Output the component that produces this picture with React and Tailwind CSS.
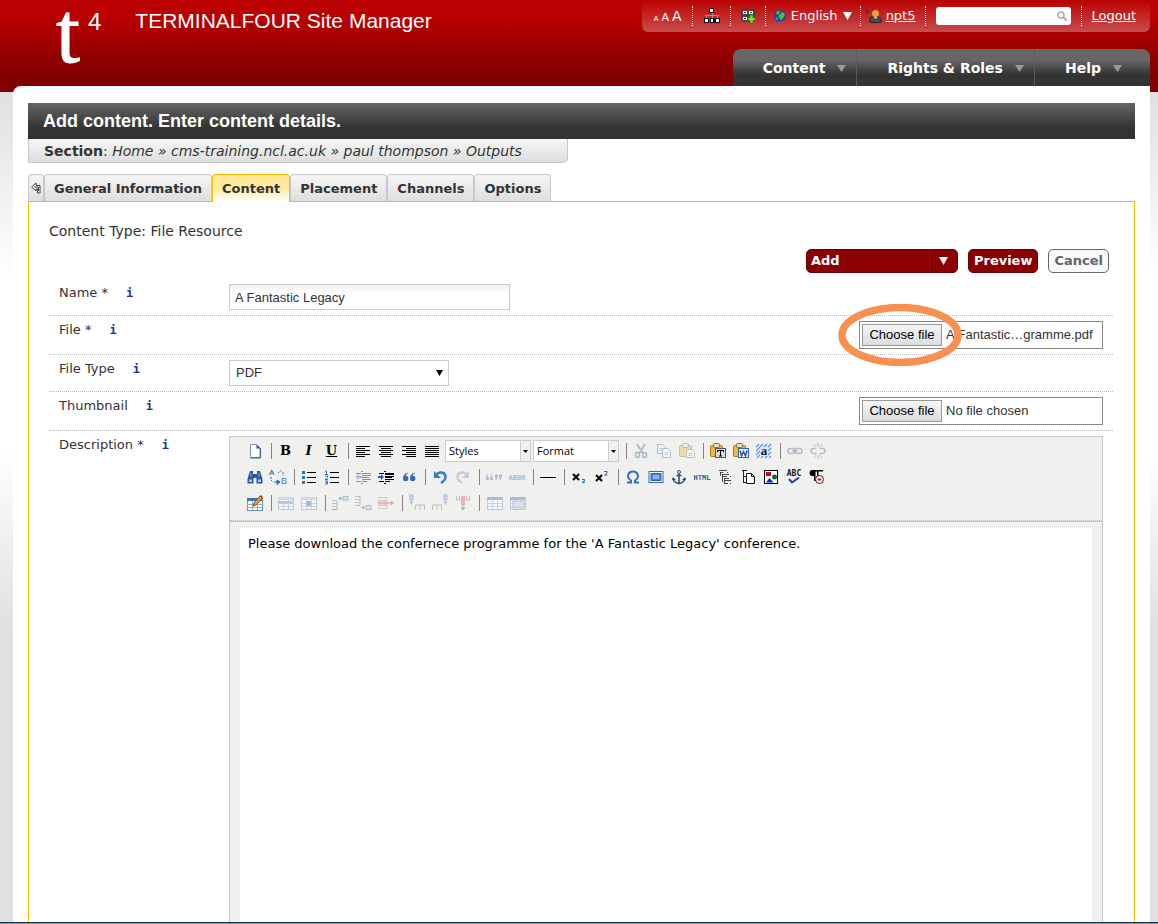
import { useRef } from "react";

const Icon = ({ children, faded }) => (
    <svg
        className={`h-4 w-4 overflow-visible ${faded ? "opacity-40" : ""}`}
        viewBox="0 0 16 16"
        fill="none"
        stroke="none"
        aria-hidden="true"
    >
        {children}
    </svg>
);

const Lines = ({ rows, color = "#000" }) => (
    <g fill={color} shapeRendering="crispEdges">
        {rows.map(([x, y, w], i) => (
            <rect key={i} x={x} y={y} width={w} height="1" />
        ))}
    </g>
);

// Small grid used by all the table icons
const Grid = ({ x = 0, y = 2, w = 15, h = 12, head = "#3f6fc4" }) => (
    <g shapeRendering="crispEdges">
        <rect x={x} y={y} width={w} height={h} fill="#fff" stroke="#6f8fbf" />
        <rect x={x} y={y} width={w} height="3" fill={head} />
        <path d={`M${x} ${y + 6}h${w}M${x} ${y + 9}h${w}M${x + 5} ${y + 3}v${h - 3}M${x + 10} ${y + 3}v${h - 3}`} stroke="#8fabd8" />
    </g>
);

const Clipboard = () => (
    <>
        <rect x="0.5" y="2.5" width="12" height="11" rx="1" fill="#efb93c" stroke="#a8771d" />
        <rect x="3.5" y="0.5" width="6" height="4" rx="1" fill="#e8e0c4" stroke="#77705c" />
    </>
);

const icons = {
    newPage: (
        <Icon>
            <path d="M3.5 1.5h6l3.500 3.500v9.500h-9.500z" fill="#fff" stroke="#7d93b5" />
            <path d="M9.500 1v4.500h4l-4-4.500z" fill="#2f5c96" />
            <path d="M13.500 5v10h-10" stroke="#3d5d8c" />
        </Icon>
    ),
    left: <Icon><Lines rows={[[1, 3, 14], [1, 5, 9], [1, 7, 14], [1, 9, 9], [1, 11, 14], [1, 13, 9]]} /></Icon>,
    center: <Icon><Lines rows={[[1, 3, 14], [3, 5, 10], [1, 7, 14], [3, 9, 10], [1, 11, 14], [3, 13, 10]]} /></Icon>,
    right: <Icon><Lines rows={[[1, 3, 14], [5, 5, 10], [1, 7, 14], [5, 9, 10], [1, 11, 14], [5, 13, 10]]} /></Icon>,
    full: <Icon><Lines rows={[[1, 3, 14], [1, 5, 14], [1, 7, 14], [1, 9, 14], [1, 11, 14], [1, 13, 14]]} /></Icon>,
    cut: (
        <Icon faded>
            <path d="M4 1l5.500 9M12 1l-5.500 9" stroke="#5f7396" strokeWidth="2" />
            <ellipse cx="4.500" cy="12" rx="2" ry="2.500" stroke="#3f64a8" strokeWidth="1.500" />
            <ellipse cx="11.500" cy="12" rx="2" ry="2.500" stroke="#3f64a8" strokeWidth="1.500" />
        </Icon>
    ),
    copy: (
        <Icon faded>
            <path d="M1.500 1.500h5l3 3v6h-8z" fill="#fff" stroke="#4a6da8" />
            <path d="M6.500 5.500h5l3 3v6h-8z" fill="#fff" stroke="#4a6da8" />
            <path d="M3 5.500h4M3 7.500h3M8.500 9.500h4M8.500 11.500h4" stroke="#7c99c9" />
        </Icon>
    ),
    paste: (
        <Icon faded>
            <Clipboard />
            <path d="M7.500 6.500h5l3 3v5h-8z" fill="#fff" stroke="#777" />
            <path d="M9.500 10.500h4M9.500 12.500h4" stroke="#888" />
        </Icon>
    ),
    pasteText: (
        <Icon>
            <Clipboard />
            <rect x="5.500" y="5.500" width="10" height="9" fill="#d5dbe3" stroke="#4c5664" />
            <path d="M7.500 9v-1.500h6v1.500M10.500 7.500v5.500M9 13h3" stroke="#000" />
        </Icon>
    ),
    pasteWord: (
        <Icon>
            <Clipboard />
            <rect x="5.500" y="5.500" width="10" height="9" fill="#f2f6fc" stroke="#3762a8" />
            <path d="M7 7.500l1.500 5.500 2-4.500 2 4.500 1.500-5.500" stroke="#2458b4" strokeWidth="1.500" />
        </Icon>
    ),
    selectAll: (
        <Icon>
            <path d="M0 4l3-3M0 8l7-7M0 12l11-11M1 15l14-14M5 15l10-10M9 15l6-6M13 15l2-2" stroke="#5b8ee6" strokeWidth="1.200" />
            <rect x="4" y="4" width="8" height="9" fill="#dbe6fb" />
            <text x="8" y="12" textAnchor="middle" className="font-['Liberation_Serif',serif] text-[13px] font-bold" fill="#111">a</text>
        </Icon>
    ),
    link: (
        <Icon faded>
            <rect x="1" y="5.500" width="7" height="5" rx="2.500" stroke="#5f7396" strokeWidth="1.500" />
            <rect x="8" y="5.500" width="7" height="5" rx="2.500" stroke="#5f7396" strokeWidth="1.500" />
            <path d="M5 8h6" stroke="#3b4c6b" />
        </Icon>
    ),
    unlink: (
        <Icon faded>
            <path d="M6.500 5.500h-3a2.500 2.500 0 0 0 0 5h3M9.500 5.500h3a2.500 2.500 0 0 1 0 5h-3" stroke="#5f7396" strokeWidth="1.500" />
            <path d="M4 1l2 3M8 0v4M12 1l-2 3M4 15l2-3M8 16v-4M12 15l-2-3" stroke="#777" />
        </Icon>
    ),
    find: (
        <Icon>
            <path d="M3 2h3v3h4V2h3l2.500 8v4.500H9.500V9h-3v5.500H.5V10z" fill="#2d5796" />
            <path d="M2 10.500h3v2.500H2zM11 10.500h3v2.500h-3z" fill="#a9c6ef" />
            <path d="M4 4v4M12 4v4" stroke="#8db3ea" />
        </Icon>
    ),
    replace: (
        <Icon>
            <text x="-1" y="6" className="font-['Liberation_Sans',sans-serif] text-[8px]" fill="#345">A</text>
            <text x="11" y="15" className="font-['Liberation_Sans',sans-serif] text-[9px]" fill="#3f78d8">B</text>
            <path d="M8 4l3-2.500 2 2v3M1 8v3l2 2" stroke="#2f66c8" strokeDasharray="2 1" />
            <path d="M4 13h4M7 11l3 2-3 2.500z" stroke="#2f66c8" fill="#2f66c8" />
        </Icon>
    ),
    bullets: (
        <Icon>
            <Lines rows={[[6, 3, 9], [6, 8, 9], [6, 13, 9]]} />
            <path d="M1 2h3v3H1zM1 7h3v3H1zM1 12h3v3H1z" fill="#336fae" />
        </Icon>
    ),
    numbers: (
        <Icon>
            <Lines rows={[[6, 3, 9], [6, 8, 9], [6, 13, 9]]} />
            <path d="M1 2h1.500v3.500M1 5.500h3M1 7h2.500v1.500L1 10.500h3M1 12h2.500v3H1M1.500 13.500h2" stroke="#3674d8" />
        </Icon>
    ),
    outdent: (
        <Icon faded>
            <Lines rows={[[6, 2, 2], [1, 4, 5], [7, 4, 9], [7, 6, 9], [7, 8, 7], [7, 10, 9], [1, 12, 5], [7, 12, 5], [6, 14, 2]]} />
            <path d="M0 8l4-3v2h3v2h-3v2z" fill="#426fc0" />
        </Icon>
    ),
    indent: (
        <Icon>
            <Lines rows={[[6, 2, 2], [1, 4, 5], [7, 4, 9], [7, 5, 9], [7, 7, 9], [7, 8, 7], [7, 10, 9], [1, 12, 5], [7, 12, 5], [6, 14, 2]]} />
            <path d="M6 8l-3-3v2H0v2h3v2z" fill="#1d5ed0" />
        </Icon>
    ),
    quote: (
        <Icon>
            <path d="M7 3.500c-3 .5-5 3-5 6a2.700 2.700 0 1 0 2.700-2.700c0-1 1-2 2.300-2.500zM14 3.500c-3 .5-5 3-5 6a2.700 2.700 0 1 0 2.700-2.700c0-1 1-2 2.300-2.500z" fill="#3a67ad" />
        </Icon>
    ),
    undo: (
        <Icon>
            <path d="M4 6c3-4 9-3 9.500 1.500.3 3-2 5-4.500 6.500" stroke="#3b78cf" strokeWidth="2.500" />
            <path d="M2 2v7h7z" fill="#3b78cf" />
        </Icon>
    ),
    redo: (
        <Icon faded>
            <path d="M12 6c-3-4-9-3-9.500 1.500-.3 3 2 5 4.500 6" stroke="#7f9ed0" strokeWidth="2.500" />
            <path d="M14 2v7h-7z" fill="#7f9ed0" />
        </Icon>
    ),
    cite: (
        <Icon faded>
            <path d="M2.500 5q-3 1-2.500 6h3v-3h-1.500zM6.500 5q-3 1-2.500 6h3v-3h-1.500zM9 5.500h3q.5 4-2.500 6v-3h-.5zM13 5.500h3q.5 4-2.500 6v-3h-.5z" fill="#5679b4" />
        </Icon>
    ),
    abbr: (
        <Icon faded>
            <text x="8" y="11" textAnchor="middle" className="font-['DejaVu_Sans_Mono',monospace] text-[7px] font-bold" fill="#4169ad">ABBR</text>
        </Icon>
    ),
    rule: <Icon><Lines rows={[[0, 8, 16]]} /></Icon>,
    sub: (
        <Icon>
            <path d="M2 5l6 6M8 5l-6 6" stroke="#000" strokeWidth="2" />
            <path d="M11 10.500h2.500v1.500l-2.500 1.500h3" stroke="#2f66c8" />
        </Icon>
    ),
    sup: (
        <Icon>
            <path d="M2 6l6 6M8 6l-6 6" stroke="#000" strokeWidth="2" />
            <path d="M10 2.500h3v1.500l-2.500 2h3" stroke="#2f66c8" />
        </Icon>
    ),
    omega: (
        <Icon>
            <path d="M2 13.500h4v-2c-5-3-3-9 2-9s7 6 2 9v2h4" stroke="#356cc0" strokeWidth="2" />
        </Icon>
    ),
    fullscreen: (
        <Icon>
            <rect x="1" y="2.500" width="14" height="11" fill="#fff" stroke="#3568ad" />
            <rect x="3" y="4.500" width="10" height="7" fill="#4d83d8" stroke="#2d60b4" />
            <path d="M5 7h6M5 9h6" stroke="#cfe0fa" />
        </Icon>
    ),
    anchor: (
        <Icon>
            <circle cx="8" cy="3" r="1.500" stroke="#2c4a75" />
            <path d="M8 4.500v10M5.500 6.500h5M2 9.500c.5 3 3 4.500 6 5 3-.5 5.500-2 6-5" stroke="#2c4a75" strokeWidth="1.500" />
            <path d="M1 11l1-3 3 3zM15 11l-1-3-3 3z" fill="#2c4a75" />
        </Icon>
    ),
    html: (
        <Icon>
            <text x="8" y="11" textAnchor="middle" className="font-['DejaVu_Sans_Mono',monospace] text-[7px] font-bold" fill="#2f6096">HTML</text>
        </Icon>
    ),
    tree: (
        <Icon>
            <g shapeRendering="crispEdges" stroke="#444">
                <path d="M3.500 3v4M5.500 5v8M7.500 9v6" />
                <path d="M2 1.500h8M4 3.500h2M10 3.500h1M6 5.500h6M6 7.500h4M13 7.500h1M8 9.500h4M8 11.500h6M8 14.500h3M13 14.500h1" />
            </g>
        </Icon>
    ),
    visual: (
        <Icon>
            <path d="M3.500 1v13M2 1.500h5M4 7.500h3M4 13.500h3" stroke="#222" />
            <path d="M6.500 4.500h5l3 3v7h-8z" fill="#fff" stroke="#111" />
            <path d="M11.500 5v2.500h3" stroke="#111" />
        </Icon>
    ),
    image: (
        <Icon>
            <rect x="1.500" y="1.500" width="13" height="13" fill="#fff" stroke="#000" />
            <rect x="3" y="3" width="5" height="4" fill="#d6001c" />
            <circle cx="11.500" cy="8" r="2.500" fill="#12662c" />
            <path d="M3 13.500L6.500 9l4 4.500z" fill="#0a20c8" />
        </Icon>
    ),
    spell: (
        <Icon>
            <text x="8" y="7" textAnchor="middle" className="font-['DejaVu_Sans_Mono',monospace] text-[8px] font-bold" fill="#111">ABC</text>
            <path d="M3 10l3 3.500 7-5" stroke="#1f3f9f" strokeWidth="2" />
        </Icon>
    ),
    hidden: (
        <Icon>
            <path d="M8 1H3.500a3 3 0 0 0 0 6H5v5h1.500V2.500H8V8h1.500V2.500H14V1z" fill="#000" />
            <circle cx="10.500" cy="10.500" r="4" fill="#fff" stroke="#222" />
            <path d="M8.500 10.500h4" stroke="#e01010" strokeWidth="2" />
        </Icon>
    ),
    table: (
        <Icon>
            <Grid y={3} />
            <path d="M6 11l1-3 6-7 2.500 2-6.500 7z" fill="#e9a53a" stroke="#7a4a12" />
            <path d="M13 1l1-1 2 2-1 1z" fill="#c0392b" />
        </Icon>
    ),
    rowProps: <Icon faded><Grid head="#9fb8e0" /><rect x="0" y="6" width="15" height="3" fill="#5b8ee6" /></Icon>,
    cellProps: <Icon faded><Grid head="#9fb8e0" /><rect x="5" y="6" width="5" height="5" fill="#2d66d0" /></Icon>,
    rowBefore: (
        <Icon faded>
            <path d="M0 5.500h5v9H0M0 8.500h5M0 11.500h5M0 14.500h5M7 3.500h4" stroke="#777" />
            <path d="M6 3.500l3-2v4z" fill="#555" />
            <rect x="11" y="1.500" width="5" height="3.500" fill="#b7d0f5" stroke="#3f6fc4" />
        </Icon>
    ),
    rowAfter: (
        <Icon faded>
            <path d="M0 1.500h5v9H0M0 4.500h5M0 7.500h5M7 12.500h3" stroke="#777" />
            <path d="M6 12.500l3-2v4z" fill="#555" />
            <rect x="11" y="10.500" width="5" height="4" fill="#b7d0f5" stroke="#3f6fc4" />
        </Icon>
    ),
    rowDelete: (
        <Icon faded>
            <path d="M0 2.500h9v11H0M0 5.500h9M0 10.500h9" stroke="#999" />
            <rect x="0" y="6.500" width="10" height="3" fill="#e85a5a" />
            <path d="M10 8h4" stroke="#555" />
            <path d="M13 5.500l3 2.500-3 2.500z" fill="#555" />
        </Icon>
    ),
    colBefore: (
        <Icon faded>
            <rect x="1" y="0" width="3" height="5" fill="#9cbcf0" stroke="#3f6fc4" />
            <path d="M2.500 6v4M6.500 15v-5h9v5M11 10v5" stroke="#777" />
            <path d="M.5 8l2-2 2 2z" fill="#555" />
        </Icon>
    ),
    colAfter: (
        <Icon faded>
            <rect x="12" y="0" width="3" height="5" fill="#9cbcf0" stroke="#3f6fc4" />
            <path d="M13.500 6v4M.5 15v-5h9v5M5 10v5" stroke="#777" />
            <path d="M11.500 8l2-2 2 2z" fill="#555" />
        </Icon>
    ),
    colDelete: (
        <Icon faded>
            <path d="M1.500 1v4h4M14.500 1v4h-4M4.500 1v4M11.500 1v4" stroke="#777" />
            <rect x="6" y="1" width="4" height="9" fill="#e85a5a" />
            <path d="M8 10v3" stroke="#555" />
            <path d="M5.500 12.500h5l-2.500 3z" fill="#555" />
        </Icon>
    ),
    split: <Icon faded><Grid x={1} /></Icon>,
    merge: (
        <Icon faded>
            <Grid x={1} />
            <rect x="4" y="6" width="11" height="7" fill="#b7cdf2" stroke="#5f86c8" />
        </Icon>
    ),
};

const toolbarRows = [
    [
        "newPage:New document", "|", "bold", "italic", "underline", "|",
        "left:Align left", "center:Align centre", "right:Align right", "full:Justify",
        "styles", "|", "cut:Cut", "copy:Copy", "paste:Paste", "|",
        "pasteText:Paste as plain text", "pasteWord:Paste from Word", "selectAll:Select all", "|",
        "link:Insert link", "unlink:Unlink",
    ],
    [
        "find:Find", "replace:Find and replace", "|", "bullets:Bulleted list", "numbers:Numbered list", "|",
        "outdent:Outdent", "indent:Indent", "quote:Block quote", "|", "undo:Undo", "redo:Redo", "|",
        "cite:Citation", "abbr:Abbreviation", "|", "rule:Horizontal rule", "|", "sub:Subscript", "sup:Superscript", "|",
        "omega:Insert special character", "fullscreen:Full screen", "anchor:Insert anchor", "html:Edit HTML source",
        "tree:Insert section link", "visual:Insert content link", "image:Insert image", "spell:Spell check", "hidden:Hide control characters",
    ],
    [
        "table:Insert table", "|", "rowProps:Row properties", "cellProps:Cell properties", "|",
        "rowBefore:Insert row before", "rowAfter:Insert row after", "rowDelete:Delete row", "|",
        "colBefore:Insert column before", "colAfter:Insert column after", "colDelete:Delete column", "|",
        "split:Split cells", "merge:Merge cells",
    ],
];

const letterClass = "flex h-[26px] w-[23px] items-center justify-center font-['DejaVu_Serif',serif] text-[13px] font-bold text-black";

const ToolbarSelect = ({ label }) => (
    <div className="relative h-[22px] w-[86px] border border-[#ccc] bg-white">
        <select
            aria-label={label}
            className="h-full w-full appearance-none pl-[3px] font-['Open_Sans',sans-serif] text-[11px] text-black outline-none"
        >
            <option>{label}</option>
        </select>
        <span className="pointer-events-none absolute inset-y-0 right-0 flex w-[10px] items-center justify-center border-l border-[#ccc] bg-[#f0f0ee]">
            <svg className="h-[3px] w-[5px]" viewBox="0 0 5 3"><path d="M0 0h5L2.500 3z" /></svg>
        </span>
    </div>
);

const ToolbarItem = ({ item }) => {
    if (item === "|") {
        return <span className="mr-[2px] ml-[5px] h-4 w-px bg-[#887f88]" />;
    }
    if (item === "bold") return <button className={letterClass}>B</button>;
    if (item === "italic") return <button className={`${letterClass} italic`}>I</button>;
    if (item === "underline") return <button className={`${letterClass} underline`}>U</button>;
    if (item === "styles") {
        return (
            <div className="flex gap-[2px] px-[2px]">
                <ToolbarSelect label="Styles" />
                <ToolbarSelect label="Format" />
            </div>
        );
    }
    const [name, title] = item.split(":");
    return (
        <button title={title} aria-label={title} className="flex h-[26px] w-[23px] items-center justify-center">
            {icons[name]}
        </button>
    );
};

const FormRow = ({ label, htmlFor, required, children }) => (
    <div className="flex border-b border-dotted border-[#bbb] py-[5px]">
        <FieldLabel label={label} htmlFor={htmlFor} required={required} />
        <div className="flex-1 px-[10px]">{children}</div>
    </div>
);

const FieldLabel = ({ label, htmlFor, required }) => (
    <div className="flex w-[170px] shrink-0 items-start pl-[10px] leading-[18px]">
        <label htmlFor={htmlFor}>{label}{required && " *"}</label>
        <button
            aria-label={`Help for ${label}`}
            className="ml-[18px] font-['DejaVu_Sans_Mono',monospace] text-[12px] leading-[18px] font-bold text-[#1c359b]"
        >
            i
        </button>
    </div>
);

const FileField = ({ id, fileName, children }) => {
    const input = useRef(null);
    return (
        <div className="relative ml-auto flex h-[28px] w-[244px] items-center border border-[#888] bg-white pl-[2px] font-['Liberation_Sans',sans-serif] text-[13px]">
            <input ref={input} id={id} type="file" className="sr-only" tabIndex={-1} />
            <button
                className="h-[22px] w-[80px] border border-[#999] bg-linear-to-b from-[#f6f6f6] to-[#dcdcdc] whitespace-nowrap text-black"
                onClick={() => input.current.click()}
            >
                Choose file
            </button>
            <span className="ml-1 whitespace-nowrap">{fileName}</span>
            {children}
        </div>
    );
};

const NavItem = ({ children }) => (
    <button className="flex items-center justify-end gap-3 border-l border-[#5c5c5c] pt-px pr-[10px] pl-[30px] first:border-l-0 last:pr-7">
        {children}
        <svg className="h-[7px] w-[9px]" viewBox="0 0 9 7"><path d="M0 0h9L4.500 7z" fill="#999" /></svg>
    </button>
);

const Tab = ({ active, children }) => (
    <button
        className={
            active
                ? "h-[28px] rounded-t-[4px] border border-b-0 border-[#f0bf00] bg-linear-to-b from-[#ffe793] via-[#ffeba3] to-white px-[9px]"
                : "mb-px h-[27px] rounded-t-[4px] border border-b-0 border-[#c8c8c8] bg-linear-to-b from-[#f6f6f6] to-[#dedede] px-[9px] pt-px"
        }
    >
        {children}
    </button>
);

const UtilityBar = () => (
    <div className="flex h-8 items-center rounded-b-[6px] bg-linear-to-b from-white/0 to-white/30 pr-[14px] pl-[12px] text-[13px] text-white">
        <div className="flex items-baseline gap-[3px] pr-[10px]">
            <button className="text-[7px]">A</button>
            <button className="text-[11px]">A</button>
            <button className="text-[14px]">A</button>
        </div>
        <div className="flex h-5 items-center border-l border-dotted border-white pr-[10px] pl-[11px]">
            <button aria-label="Site structure">
                <svg className="h-4 w-4" viewBox="0 0 16 16" shapeRendering="crispEdges">
                    <path d="M8 5v3M1 7.500h14M2.500 8v3M8 8v3M13.500 8v3" stroke="#999" fill="none" />
                    <path d="M5 0h5v5H5zM0 10h5v5H0zM5.500 10h5v5h-5zM11 10h5v5h-5z" fill="#111" />
                    <path d="M6 1h3v3H6zM1 11h3v3H1zM7 11h2v3H7zM12 11h3v3h-3z" fill="#fff" />
                </svg>
            </button>
        </div>
        <div className="flex h-5 items-center border-l border-dotted border-white pr-[10px] pl-[10px]">
            <button aria-label="Add content type">
                <svg className="h-[14px] w-[14px]" viewBox="0 0 14 14">
                    <rect width="14" height="13" rx="2" fill="#444" />
                    <path d="M2 2h4v3H2zM8 2h4v3H8zM2 8h4v3H2z" fill="#eee" />
                    <path d="M3 4l1-1 1 1M9 4l1-1 1 1M3 10l1-1 1 1" stroke="#333" fill="none" />
                    <path d="M9 6h3v2.500h2v3h-2V14H9v-2.500H7v-3h2z" fill="#8fd03a" stroke="#35720e" strokeWidth=".7" />
                </svg>
            </button>
        </div>
        <button className="flex h-5 items-center border-l border-dotted border-white pr-2 pl-2">
            <svg className="mr-[5px] h-3 w-3" viewBox="0 0 12 12">
                <circle cx="6" cy="6" r="6" fill="#174f9c" />
                <path d="M2 2l4-1-1 3-2 1zM6 4l3-2 2 3-2 3-2 3-1-3-2-1z" fill="#66b043" />
                <path d="M2 7l2 2-1 1z" fill="#8ec8f2" />
            </svg>
            English
            <svg className="ml-[5px] h-2 w-[9px]" viewBox="0 0 9 8"><path d="M0 0h9L4.500 8z" fill="#fff" /></svg>
        </button>
        <div className="flex h-5 items-center border-l border-dotted border-white pr-[10px] pl-[5px]">
            <svg className="mr-1 h-4 w-4" viewBox="0 0 16 16">
                <path d="M0 2.500h3M0 4.500h3" stroke="#6b1010" />
                <path d="M4 14.500c-1-4 1-7 5-7s7 3 6 7z" fill="#4a4a42" stroke="#2c2c28" />
                <circle cx="9.500" cy="5.500" r="3.500" fill="#e3a53c" />
                <path d="M7.500 9l2 2 2-2z" fill="#d8c9a0" />
            </svg>
            <a href="#user" className="underline">npt5</a>
        </div>
        <div className="flex h-5 items-center border-l border-dotted border-white px-[10px]">
            <div className="relative">
                <input type="search" aria-label="Search" className="block h-[18px] w-[135px] rounded-[3px] bg-white pr-5 pl-1 text-[11px] text-black" />
                <svg className="absolute top-1 right-1 h-[10px] w-[10px]" viewBox="0 0 10 10" fill="none" stroke="#aaa">
                    <circle cx="4" cy="4" r="3" strokeWidth="1.500" />
                    <path d="M6.500 6.500l3 3" strokeWidth="2" />
                </svg>
            </div>
        </div>
        <div className="flex h-5 items-center border-l border-dotted border-white pl-[9px]">
            <a href="#logout" className="underline">Logout</a>
        </div>
    </div>
);

const Header = () => (
    <header className="flex h-[92px] justify-between bg-linear-to-b from-[#ba0000] from-20% to-[#820000] to-80% pr-2 pb-[6px] pl-[56px]">
        <div className="flex items-start text-white">
            <svg className="h-[66px] w-[30px] overflow-visible" viewBox="0 0 30 66" role="img" aria-label="t4">
                <text x="0" y="62" fill="#fff" stroke="#fff" className="font-['Liberation_Serif',serif] text-[86px]">t</text>
            </svg>
            <span className="ml-[2px] pt-2 font-['Liberation_Sans',sans-serif] text-[24px] leading-[28px]">4</span>
            <h1 className="ml-[34px] pt-2 font-['Liberation_Sans',sans-serif] text-[21px] leading-[26px] whitespace-nowrap">
                TERMINALFOUR Site Manager
            </h1>
        </div>
        <div className="flex flex-col items-end justify-between">
            <UtilityBar />
            <nav className="flex h-[37px] rounded-t-[8px] bg-linear-to-b from-[#666] from-30% to-[#333] to-70% text-[14px] font-bold text-white">
                <NavItem>Content</NavItem>
                <NavItem>Rights &amp; Roles</NavItem>
                <NavItem>Help</NavItem>
            </nav>
        </div>
    </header>
);

const tabs = ["General Information", "Content", "Placement", "Channels", "Options"];

const App = () => {
    return (
        <div className="flex min-h-screen flex-col bg-[linear-gradient(to_bottom,#e0e0e0_92px,#fff_280px,#fff_450px,#e0e0e0_630px)] font-['DejaVu_Sans',sans-serif] text-[13px] text-[#333]">
            <Header />

            <main className="-mt-[6px] mr-2 ml-[13px] flex flex-1 flex-col rounded-tl-[8px] bg-white px-[15px] pt-[17px]">
                <h2 className="bg-linear-to-b from-[#666] to-[#333] to-70% pl-[15px] font-['Liberation_Sans',sans-serif] text-[18px] leading-[36px] font-bold text-white">
                    Add content. Enter content details.
                </h2>
                <div className="self-start rounded-br-[5px] border border-t-0 border-[#c8c8c8] bg-linear-to-b from-[#f6f6f6] to-[#dedede] pt-px pr-[45px] pl-[15px] text-[14px] leading-[22px]">
                    <b>Section</b>: <i>Home » cms-training.ncl.ac.uk » paul thompson » Outputs</i>
                </div>

                {/* tabs sit on top of the panel border */}
                <div className="relative mt-[11px] flex items-start text-[13px] font-bold">
                    <button aria-label="Back" className="h-[27px] w-[16px] rounded-t-[4px] border border-b-0 border-[#c8c8c8] bg-linear-to-b from-[#f6f6f6] to-[#dedede] pl-[2px]">
                        <svg className="h-3 w-[10px]" viewBox="0 0 10 12" fill="#fff" stroke="#444">
                            <path d="M.7 5L5 1v2.500M.7 5L5 9V7h1.500v4h2.500V3.500H5M3 5h4.500v4" />
                        </svg>
                    </button>
                    {tabs.map((tab) => (
                        <Tab key={tab} active={tab === "Content"}>{tab}</Tab>
                    ))}
                </div>

                <section className="-mt-px flex flex-1 flex-col border border-b-0 border-[#f0bf00] pt-5 pr-[21px] pl-5">
                    <p className="text-[14px] leading-[18px]">Content Type: File Resource</p>
                    <div className="mt-[9px] mb-[6px] flex justify-end gap-[10px] pr-1 text-[13px] font-bold">
                        <div className="flex h-6 w-[152px] overflow-hidden rounded-[5px] border border-[#6b0000] bg-[#8b0000] text-white">
                            <button className="flex-1 pl-1 text-left">Add</button>
                            <button aria-label="More add options" className="flex w-7 items-center justify-center border-l border-[#4a3030]">
                                <svg className="h-2 w-[9px]" viewBox="0 0 9 8"><path d="M0 0h9L4.500 8z" fill="#fff" /></svg>
                            </button>
                        </div>
                        <button className="h-6 rounded-[5px] border border-[#6b0000] bg-[#8b0000] px-[5px] text-white">Preview</button>
                        <button className="h-6 rounded-[5px] border border-[#666] bg-[#f9f9f9] px-[5px] text-[#666]">Cancel</button>
                    </div>

                    <FormRow label="Name" htmlFor="name" required>
                        <input
                            id="name"
                            type="text"
                            defaultValue="A Fantastic Legacy"
                            className="block h-[26px] w-[281px] border border-[#ccc] bg-linear-to-b from-[#eee] to-white to-30% px-[5px] font-['Liberation_Sans',sans-serif] text-[13px]"
                        />
                    </FormRow>
                    <FormRow label="File" htmlFor="file" required>
                        <FileField id="file" fileName="A Fantastic…gramme.pdf">
                            <svg className="pointer-events-none absolute -top-[18px] -left-[22px] h-[62px] w-[124px]" viewBox="0 0 124 62">
                                <ellipse cx="62" cy="31" rx="58" ry="27.500" fill="none" stroke="#f79051" strokeWidth="7.500" />
                            </svg>
                        </FileField>
                    </FormRow>
                    <FormRow label="File Type" htmlFor="fileType">
                        <div className="relative w-[220px]">
                            <select id="fileType" className="block h-[26px] w-full appearance-none border border-[#ccc] bg-white px-[6px] font-['Liberation_Sans',sans-serif] text-[13px]">
                                <option>PDF</option>
                            </select>
                            <svg className="pointer-events-none absolute top-[10px] right-[6px] h-[6px] w-[7px]" viewBox="0 0 7 6"><path d="M0 0h7L3.500 6z" /></svg>
                        </div>
                    </FormRow>
                    <FormRow label="Thumbnail" htmlFor="thumbnail">
                        <FileField id="thumbnail" fileName="No file chosen" />
                    </FormRow>

                    <div className="flex flex-1 pt-[5px]">
                        <FieldLabel label="Description" htmlFor="description" required />
                        <div className="flex min-w-0 flex-1 flex-col px-[10px]">
                            <div className="flex flex-1 flex-col border border-b-0 border-[#c8c8c8] bg-[#f0f0ee]">
                                <div className="border-b border-dotted border-[#bbb] pt-px pb-[4px] pl-[13px]">
                                    {toolbarRows.map((row, i) => (
                                        <div key={i} className="flex h-[26px] items-center">
                                            {row.map((item, j) => (
                                                <ToolbarItem key={j} item={item} />
                                            ))}
                                        </div>
                                    ))}
                                </div>
                                <div className="flex flex-1 flex-col border-t border-[#c8c8c8] px-[10px] pt-[6px]">
                                    <textarea
                                        id="description"
                                        className="min-h-[300px] w-full flex-1 resize-none bg-white p-2 text-[13px] leading-4 text-black outline-none"
                                        defaultValue="Please download the confernece programme for the 'A Fantastic Legacy' conference."
                                    />
                                </div>
                            </div>
                        </div>
                    </div>
                </section>
            </main>
            <footer className="h-[2px] border-t border-[#1c2c44] bg-[#7d9fc0]" />
        </div>
    );
};

export default App;
